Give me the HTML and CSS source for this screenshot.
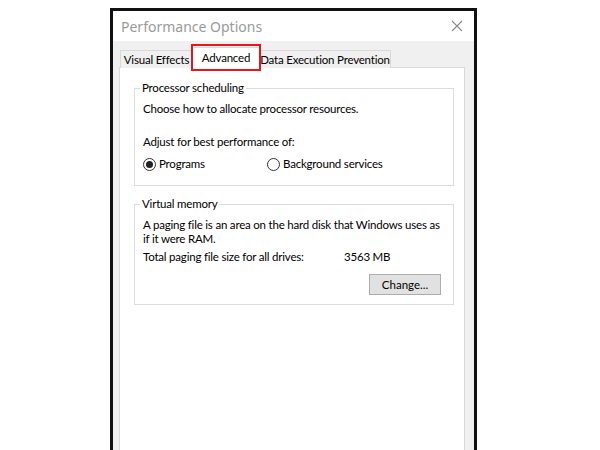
FILE: index.html
```html
<!DOCTYPE html>
<html lang="en">
<head>
    <meta charset="UTF-8">
    <title>Performance Options</title>
    <link rel="stylesheet" href="styles.css">
</head>
<body>
    <div class="window">
        <div class="titlebar">
            <span class="title">Performance Options</span>
            <svg class="close" width="12" height="12" viewBox="0 0 12 12">
                <path d="M1 1 L11 11 M11 1 L1 11" stroke="#8a8a8a" stroke-width="1.1" fill="none"/>
            </svg>
        </div>
        <div class="client">
            <div class="tabs">
                <div class="tab tab-ve">Visual Effects</div>
                <div class="tab tab-adv active">Advanced</div>
                <div class="tab tab-dep">Data Execution Prevention</div>
            </div>
            <div class="panel">
                <fieldset class="group">
                    <legend>Processor scheduling</legend>
                    <p>Choose how to allocate processor resources.</p>
                    <p class="spaced">Adjust for best performance of:</p>
                    <div class="radios">
                        <label class="radio"><span class="dot checked"></span>Programs</label>
                        <label class="radio"><span class="dot"></span>Background services</label>
                    </div>
                </fieldset>

                <fieldset class="group vm">
                    <legend>Virtual memory</legend>
                    <p>A paging file is an area on the hard disk that Windows uses as<br>if it were RAM.</p>
                    <div class="total">
                        <span class="total-label">Total paging file size for all drives:</span>
                        <span>3563 MB</span>
                    </div>
                    <div class="actions">
                        <button type="button">Change...</button>
                    </div>
                </fieldset>
            </div>
        </div>
    </div>
</body>
</html>
```

FILE: styles.css
```css
body {
    margin: 0;
    background: #fff;
    font-family: Lato, "Noto Sans", sans-serif;
    font-size: 11.5px;
    letter-spacing: -0.2px;
    color: #000;
    overflow: hidden;
}
.window {
    margin: 8px 0 0 110px;
    width: 361px;
    height: 439px;
    border: 3px solid #111;
    border-bottom: none;
    background: #f0f0f0;
    overflow: hidden;
}
.titlebar {
    height: 30px;
    background: #fff;
    display: flex;
    align-items: center;
    justify-content: space-between;
    padding: 0 11px 0 8px;
}
.title {
    font-family: "Noto Sans", sans-serif;
    font-size: 14px;
    letter-spacing: 0;
    color: #9a9a9a;
}
.client {
    padding: 8px 9px 0 6px;
}
.tabs {
    display: flex;
    align-items: flex-end;
    padding-left: 1px;
    height: 19px;
    margin-bottom: -1px;
    position: relative;
    z-index: 1;
}
.tab {
    height: 18px;
    line-height: 17px;
    border: 1px solid #d9d9d9;
    border-bottom: none;
    background: #f0f0f0;
    box-sizing: border-box;
    white-space: nowrap;
    text-align: center;
}
.tab-ve {
    width: 73px;
}
.tab-adv {
    width: 68px;
}
.tab-dep {
    width: 132px;
}
.tab + .tab {
    margin-left: -1px;
}
.tab.active {
    position: relative;
    height: 22px;
    line-height: 20px;
    margin-bottom: -1px;
    background: #fff;
}
.tab.active::after {
    content: "";
    position: absolute;
    top: -4px;
    bottom: -2px;
    left: -2px;
    right: -2px;
    border: 2px solid #e5161c;
}
.panel {
    background: #fff;
    border: 1px solid #d9d9d9;
    height: 400px;
    padding: 13px 10px 0 14px;
}
.group {
    margin: 0;
    min-width: 0;
    border: 1px solid #dcdcdc;
    padding: 0 12px 14px 8px;
    line-height: 14px;
}
.group legend {
    padding: 0 2px;
    margin-left: -3px;
    line-height: 14px;
}
.group p {
    margin: 7px 0 0;
    white-space: nowrap;
}
.group p.spaced {
    margin-top: 19px;
}
.radios {
    display: flex;
    margin-top: 8px;
}
.radio {
    display: flex;
    align-items: center;
    width: 124px;
    white-space: nowrap;
}
.dot {
    flex: none;
    width: 11px;
    height: 11px;
    border: 1px solid #333;
    border-radius: 50%;
    margin-right: 3px;
    position: relative;
}
.dot.checked::after {
    content: "";
    position: absolute;
    top: 2px;
    left: 2px;
    width: 7px;
    height: 7px;
    border-radius: 50%;
    background: #222;
}
.vm {
    margin-top: 11px;
    padding-bottom: 9px;
}
.total {
    display: flex;
    margin-top: 4px;
    white-space: nowrap;
}
.total-label {
    width: 201px;
}
.actions {
    display: flex;
    justify-content: flex-end;
    margin-top: 10px;
}
button {
    width: 72px;
    height: 21px;
    background: #e1e1e1;
    border: 1px solid #adadad;
    font: inherit;
    color: #000;
    padding: 0;
}
```
